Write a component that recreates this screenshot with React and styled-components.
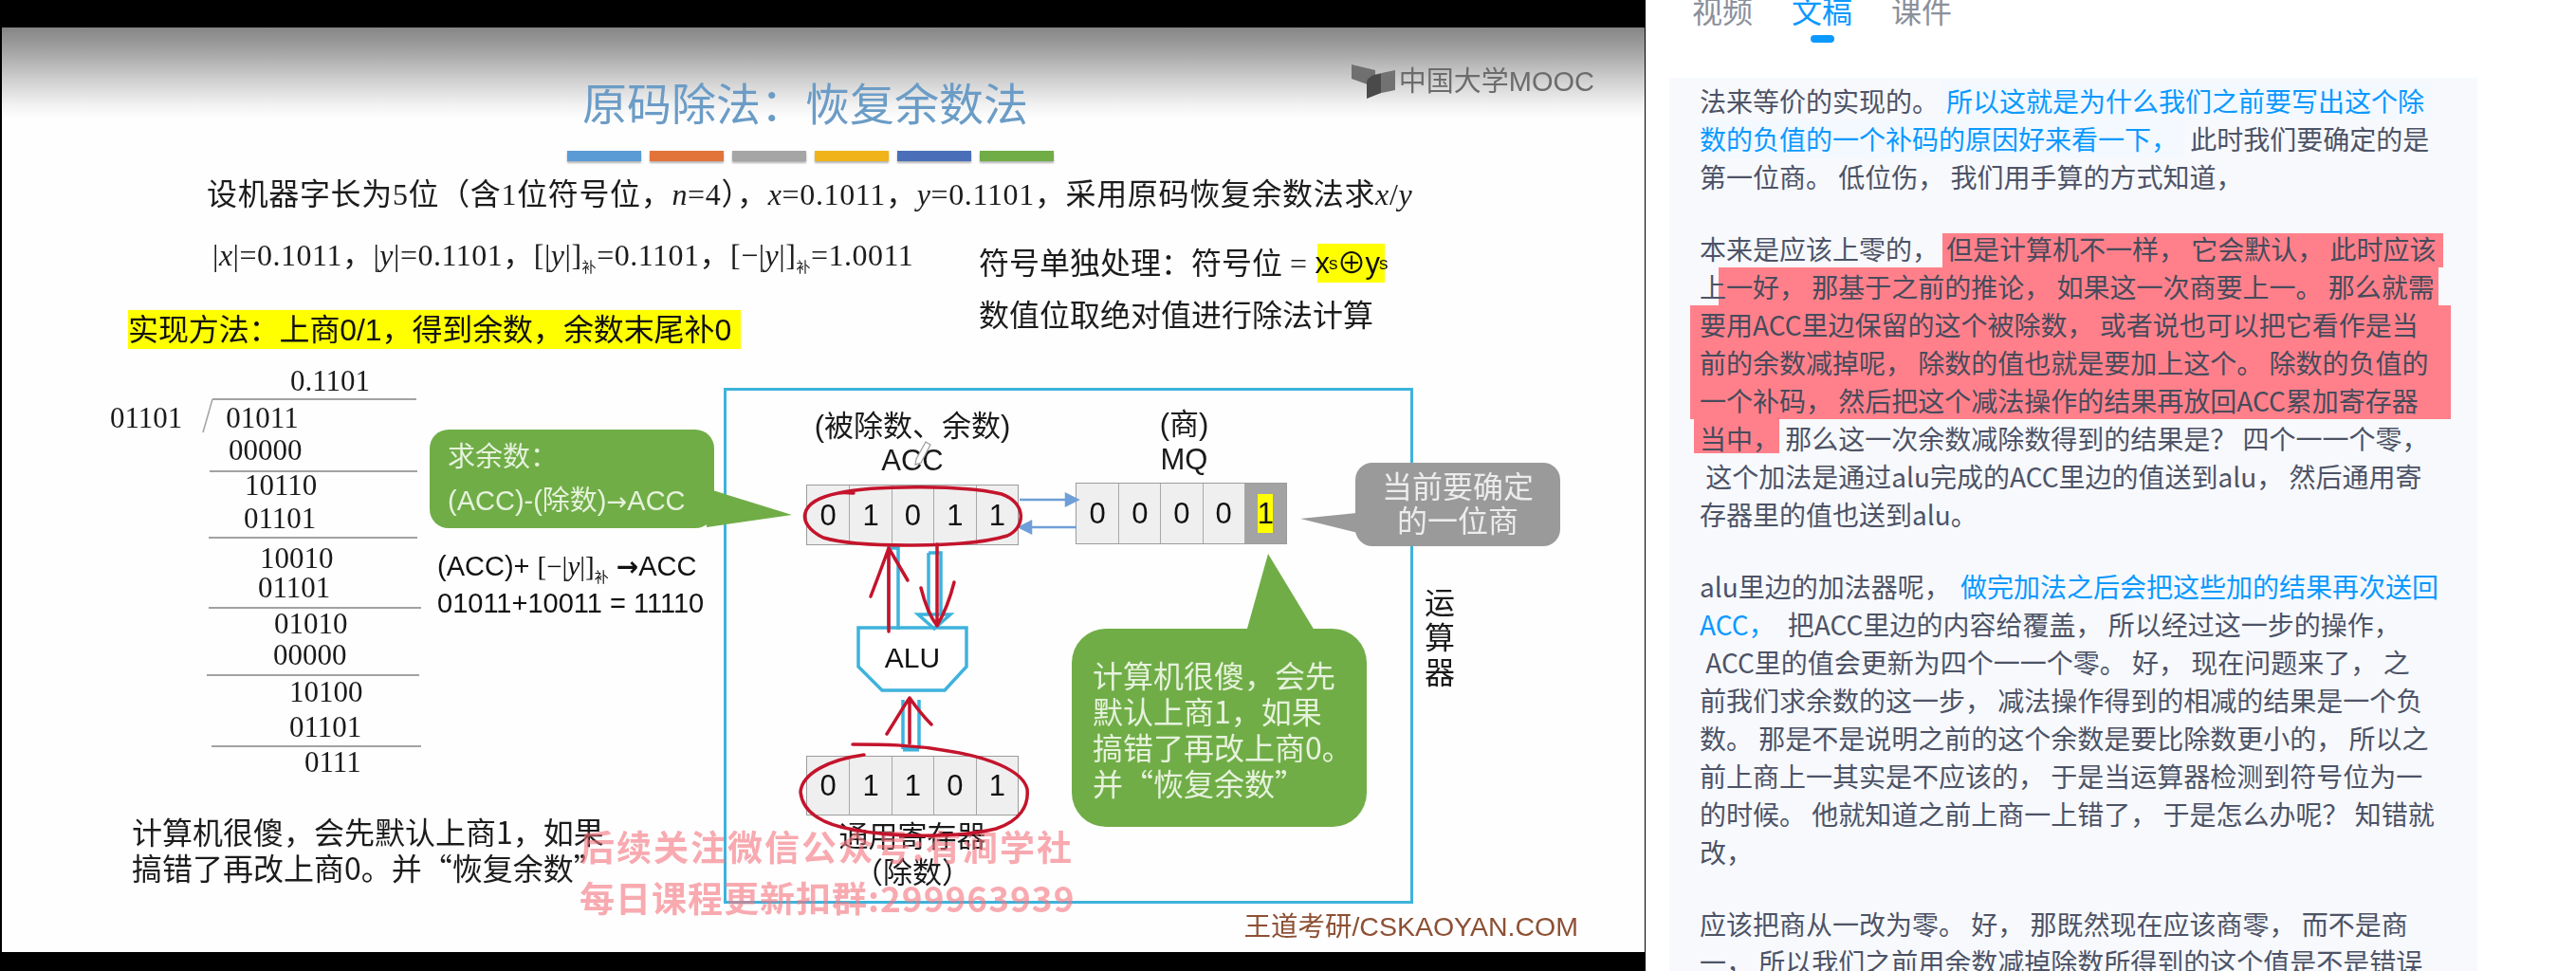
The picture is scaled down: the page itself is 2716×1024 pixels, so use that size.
import React from "react";
import styled, { createGlobalStyle } from "styled-components";

const CJK = '"Noto Sans CJK SC", sans-serif';
const SERIF = '"Liberation Serif", "Noto Sans CJK SC", serif';
const SANS = '"Liberation Sans", "Noto Sans CJK SC", sans-serif';
const GREEN = "#70ad47";
const GRAY = "#9a9a9a";
const CYAN = "#3db3dc";
const RED = "#c4142c";
const PINK = "#ff808a";

const Global = createGlobalStyle`
  html, body { margin: 0; padding: 0; background: #fff; overflow: hidden; }
  #root { width: 2716px; height: 1024px; }
`;

const Page = styled.div`
  display: flex;
  width: 2716px;
  height: 1024px;
  overflow: hidden;
  background: #fff;
`;

/* video frame */
const Video = styled.section`
  position: relative;
  flex: 0 0 1735px;
  box-sizing: border-box;
  height: 1024px;
  padding: 29px 1px 20px 2px;
  background: #000;
  overflow: hidden;
  filter: blur(0.55px);
`;
const Slide = styled.div`
  display: flex;
  flex-direction: column;
  height: 100%;
  background: linear-gradient(#858585 0, #a4a4a4 25px, #cfcfcf 55px, #f2f2f2 82px, #fefefe 96px, #fefefe 100%);
`;

/* header */
const Header = styled.header`
  display: flex;
  align-items: flex-start;
  height: 130px;
  padding-right: 53px;
`;
const Title = styled.h1`
  margin: 54px 0 0 612px;
  font: 400 47px/47px ${CJK};
  color: #6b9cc6;
  white-space: pre;
`;
const Logo = styled.div`
  display: flex;
  align-items: center;
  margin: 37px 0 0 auto;
  font: 400 29px/1 ${SANS};
  color: #6c6c6c;
  white-space: pre;
`;
const LogoText = styled.span`
  margin-left: -3px;
`;
const Bars = styled.div`
  display: flex;
  gap: 9px;
  margin-left: 596px;
`;
const Bar = styled.i`
  display: block;
  width: 78px;
  height: 11px;
  background: ${(p) => p.$c};
  box-shadow: 0 2px 2px rgba(0, 0, 0, 0.3);
`;

/* problem statement */
const Statement = styled.p`
  margin: 19px 0 0 216px;
  font: 400 32px/32px ${SERIF};
  letter-spacing: 0.65px;
  color: #1c1c1c;
  white-space: pre;
`;
const NotesRow = styled.div`
  display: flex;
  margin-top: 32px;
`;
const NotesLeft = styled.div`
  flex: 0 0 1030px;
  display: flex;
  flex-direction: column;
`;
const MathLine = styled.div`
  margin-left: 222px;
  font: 400 32px/32px ${SERIF};
  letter-spacing: 0.5px;
  color: #1c1c1c;
  white-space: pre;
`;
const Em = styled.i`
  font-family: "Liberation Serif", serif;
`;
const Sub = styled.sub`
  font-size: 15px;
  line-height: 0;
  font-family: ${CJK};
`;
const MethodBand = styled.div`
  display: flex;
  align-items: center;
  width: 646px;
  height: 41px;
  margin: 42px 0 0 133px;
  background: #ffff00;
  font: 400 32px/1 ${SANS};
  letter-spacing: -0.1px;
  color: #111;
  white-space: pre;
`;
const NotesRight = styled.div`
  display: flex;
  flex-direction: column;
  gap: 19px;
  padding-top: 4px;
  font: 400 32px/32px ${SERIF};
  color: #1c1c1c;
  white-space: pre;
`;
const SignRow = styled.div`
  display: flex;
  align-items: center;
  gap: 11px;
`;
const SignBox = styled.span`
  display: flex;
  align-items: center;
  justify-content: center;
  width: 71px;
  height: 41px;
  background: #ffff00;
  font: 400 31px/1 ${SANS};
  letter-spacing: -1px;
  color: #111;
`;
const SignSub = styled.sub`
  font-size: 19px;
  line-height: 0;
`;

/* main row */
const Main = styled.main`
  display: flex;
  align-items: flex-start;
  margin-top: 19px;
`;
const LeftColumn = styled.div`
  flex: 0 0 337px;
  min-width: 0;
  margin-left: 114px;
  display: flex;
  flex-direction: column;
`;
const DivRow = styled.div`
  display: flex;
  height: 30px;
  margin-top: ${(p) => p.$mt}px;
  padding-left: ${(p) => p.$pl}px;
  font: 400 31px/30px "Liberation Serif", serif;
  color: #1a1a1a;
  white-space: pre;
`;
const Divisor = styled.span`
  margin-right: 46px;
`;
const Rule = styled.i`
  display: block;
  width: ${(p) => p.$w}px;
  height: 2px;
  margin-top: ${(p) => p.$mt}px;
  margin-left: ${(p) => p.$ml}px;
  background: #a2a2a2;
`;
const SlowNote = styled.div`
  margin: 38px 0 0 23px;
  font: 400 32px/38px ${CJK};
  color: #1c1c1c;
  white-space: pre;
`;
const MidColumn = styled.div`
  flex: 0 0 310px;
  min-width: 0;
  display: flex;
  flex-direction: column;
  padding-top: 66px;
`;
const Bubble = styled.div`
  box-sizing: border-box;
  flex: none;
  align-self: flex-start;
  width: ${(p) => p.$w}px;
  height: ${(p) => p.$h}px;
  margin-top: ${(p) => p.$mt || 0}px;
  margin-left: ${(p) => p.$ml || 0}px;
  padding-left: ${(p) => p.$pl || 0}px;
  display: flex;
  flex-direction: column;
  justify-content: center;
  align-items: flex-start;
  border-radius: ${(p) => p.$r}px;
  background: ${GREEN};
  color: #e6f2dc;
  font: 400 ${(p) => p.$size || 32}px/${(p) => p.$lh}px ${(p) => (p.$cjk ? CJK : SANS)};
  white-space: pre;
`;
const GrayBubble = styled.div`
  position: absolute;
  left: 1429px;
  top: 488px;
  width: 216px;
  height: 88px;
  display: flex;
  flex-direction: column;
  align-items: center;
  justify-content: center;
  border-radius: 18px;
  background: ${GRAY};
  color: #ececec;
  font: 400 32px/36px ${SANS};
  white-space: pre;
`;
const Arrow = styled.span`
  font-family: "DejaVu Sans", sans-serif;
  font-weight: ${(p) => p.$w || 400};
  font-size: ${(p) => p.$s || 26}px;
`;
const FormulaBlock = styled.div`
  margin: 21px 0 0 8px;
  font: 400 29px/39px ${SANS};
  color: #111;
  white-space: pre;
`;
const FormulaSerif = styled.span`
  font: 400 29px/1 "Liberation Serif", serif;
`;

/* arithmetic unit diagram */
const UnitFrame = styled.div`
  flex: 0 0 727px;
  height: 544px;
  box-sizing: border-box;
  margin-top: 22px;
  padding: 20px 0 0 84px;
  display: flex;
  align-items: flex-start;
  border: 3.5px solid ${CYAN};
`;
const DataColumn = styled.div`
  flex: 0 0 224px;
  display: flex;
  flex-direction: column;
  align-items: center;
`;
const QuotientColumn = styled.div`
  flex: 0 0 223px;
  min-width: 0;
  margin: -3px 0 0 60px;
  display: flex;
  flex-direction: column;
  align-items: center;
`;
const RegLabel = styled.div`
  margin-left: ${(p) => p.$ml || 0}px;
  margin-top: ${(p) => p.$mt || 0}px;
  font: 400 31px/${(p) => p.$lh || 36}px ${SANS};
  color: #1a1a1a;
  white-space: pre;
`;
const Register = styled.div`
  flex: none;
  align-self: stretch;
  height: ${(p) => p.$h}px;
  margin-top: ${(p) => p.$mt}px;
  display: grid;
  grid-template-columns: repeat(5, 1fr);
  box-sizing: border-box;
  border: 1.5px solid #9c9c9c;
  background: #efefef;
`;
const Cell = styled.div`
  display: flex;
  align-items: center;
  justify-content: center;
  font: 400 31px/1 ${SANS};
  color: #111;
  background: ${(p) => (p.$dark ? "#a3a3a3" : "transparent")};
  & + & {
    border-left: 1.5px solid #a8a8a8;
  }
`;
const QuotientBit = styled.span`
  display: flex;
  align-items: center;
  justify-content: center;
  width: 16px;
  height: 41px;
  background: #ffff00;
`;
const Alu = styled.div`
  flex: none;
  display: grid;
  width: 118px;
  height: 71px;
  margin-top: 85px;
  place-items: center;
  & > * {
    grid-area: 1 / 1;
  }
`;
const AluName = styled.span`
  margin-top: -3px;
  font: 400 30px/1 ${SANS};
  color: #111;
`;
const UnitLabel = styled.div`
  flex: 0 0 32px;
  margin: 231px 0 0 12px;
  font: 400 32px/37px ${SERIF};
  color: #1a1a1a;
  text-align: center;
`;
const Overlay = styled.svg`
  position: absolute;
  left: 0;
  top: 0;
  pointer-events: none;
`;
const Watermark = styled.div`
  position: absolute;
  left: 611px;
  top: 873px;
  display: flex;
  flex-direction: column;
  gap: 15px;
  font: 700 37px/39px ${CJK};
  color: rgba(243, 118, 128, 0.62);
  white-space: pre;
`;
const WatermarkLine = styled.span`
  letter-spacing: ${(p) => p.$ls}px;
`;
const CreditRow = styled.footer`
  display: flex;
  justify-content: flex-end;
  margin-top: 10px;
  padding-right: 70px;
  font: 400 28.5px/29px ${SANS};
  color: #8d5034;
  white-space: pre;
`;

/* transcript side */
const Side = styled.aside`
  flex: 1;
  display: flex;
  flex-direction: column;
  padding-left: 25px;
  min-width: 0;
`;
const Tabs = styled.nav`
  display: flex;
  gap: 41px;
  margin: -6px 0 37px 24px;
`;
const Tab = styled.div`
  display: flex;
  flex-direction: column;
  align-items: center;
  gap: 11px;
  font: 400 32px/32px ${CJK};
  color: ${(p) => (p.$active ? "#0a99ff" : "#8b909b")};
`;
const TabDot = styled.i`
  width: 25px;
  height: 8px;
  border-radius: 4px;
  background: ${(p) => (p.$active ? "#0a99ff" : "transparent")};
`;
const Panel = styled.div`
  width: 852px;
  flex: 1;
  box-sizing: border-box;
  padding: 4px 0 0 32px;
  background: #f7f9fd;
  overflow: hidden;
  font: 400 28px/40px ${CJK};
  color: #4d5366;
`;
const Para = styled.div`
  margin-bottom: 36px;
`;
const Line = styled.div`
  height: 40px;
  white-space: pre;
`;
const Blue = styled.span`
  display: inline-block;
  padding: 0 7px 0 ${(p) => p.$pl ?? 6}px;
  margin-left: ${(p) => p.$ml ?? 0}px;
  color: #0a99ff;
  background: ${(p) => (p.$plain ? "transparent" : "#f3f9ff")};
`;
const Pink = styled.span`
  display: inline-block;
  box-sizing: border-box;
  height: 40px;
  vertical-align: top;
  width: ${(p) => p.$w}px;
  margin-left: ${(p) => p.$ml}px;
  padding-left: ${(p) => p.$pl}px;
  color: #474b5c;
  background: ${(p) => (p.$band ? `linear-gradient(${p.$band})` : PINK)};
`;
const Above = styled.span`
  position: relative;
  z-index: 1;
`;

const barColors = ["#5b9bd5", "#e2743a", "#a5a5a5", "#f0b41a", "#4a6fb8", "#70ad47"];

export default function App() {
  return (
    <Page>
      <Global />
      <Video>
        <Slide>
          <Header>
            <Title>原码除法：恢复余数法</Title>
            <Logo>
              <svg width="54" height="40" viewBox="0 0 54 40">
                <polygon points="1,2 26,8 26,26 1,17" fill="#707070" />
                <polygon points="28,12 47,8 47,29 18,35" fill="#727272" />
                <path d="M17 38 L17 20 Q20 12 32 12 L32 32 Z" fill="#4a4a4a" />
              </svg>
              <LogoText>中国大学MOOC</LogoText>
            </Logo>
          </Header>
          <Bars>{barColors.map((c) => <Bar key={c} $c={c} />)}</Bars>
          <Statement>设机器字长为5位（含1位符号位，<Em>n</Em>=4），<Em>x</Em>=0.1011，<Em>y</Em>=0.1101，采用原码恢复余数法求<Em>x</Em>/<Em>y</Em></Statement>
          <NotesRow>
            <NotesLeft>
              <MathLine>|<Em>x</Em>|=0.1011，|<Em>y</Em>|=0.1101，[|<Em>y</Em>|]<Sub>补</Sub>=0.1101，[−|<Em>y</Em>|]<Sub>补</Sub>=1.0011</MathLine>
              <MethodBand>实现方法：上商0/1，得到余数，余数末尾补0</MethodBand>
            </NotesLeft>
            <NotesRight>
              <SignRow>
                符号单独处理：符号位 =
                <SignBox>x<SignSub>s</SignSub>⊕y<SignSub>s</SignSub></SignBox>
              </SignRow>
              <div>数值位取绝对值进行除法计算</div>
            </NotesRight>
          </NotesRow>

          <Main>
            <LeftColumn>
              <DivRow $mt={0} $pl={190}>0.1101</DivRow>
              <Rule $mt={3} $ml={108} $w={215} />
              <DivRow $mt={4} $pl={0}><Divisor>01101</Divisor>01011</DivRow>
              <DivRow $mt={4} $pl={125}>00000</DivRow>
              <Rule $mt={6} $ml={105} $w={219} />
              <DivRow $mt={-1} $pl={142}>10110</DivRow>
              <DivRow $mt={5} $pl={141}>01101</DivRow>
              <Rule $mt={4} $ml={104} $w={220} />
              <DivRow $mt={6} $pl={158}>10010</DivRow>
              <DivRow $mt={1} $pl={156}>01101</DivRow>
              <Rule $mt={5} $ml={104} $w={224} />
              <DivRow $mt={1} $pl={173}>01010</DivRow>
              <DivRow $mt={3} $pl={172}>00000</DivRow>
              <Rule $mt={5} $ml={102} $w={224} />
              <DivRow $mt={2} $pl={189}>10100</DivRow>
              <DivRow $mt={7} $pl={189}>01101</DivRow>
              <Rule $mt={4} $ml={107} $w={221} />
              <DivRow $mt={1} $pl={205}>0111</DivRow>
              <SlowNote>{"计算机很傻，会先默认上商1，如果\n搞错了再改上商0。并“恢复余数”"}</SlowNote>
            </LeftColumn>

            <MidColumn>
              <Bubble $w={300} $h={104} $r={20} $pl={19} $lh={46} $size={29}>
                <span>求余数：</span>
                <span>(ACC)-(除数)<Arrow>→</Arrow>ACC</span>
              </Bubble>
              <FormulaBlock>
                <div>(ACC)+ <FormulaSerif>[−|<Em>y</Em>|]</FormulaSerif><Sub>补</Sub> <Arrow $w={700} $s={28}>→</Arrow>ACC</div>
                <div>01011+10011 = 11110</div>
              </FormulaBlock>
            </MidColumn>

            <UnitFrame>
              <DataColumn>
                <RegLabel>(被除数、余数)</RegLabel>
                <RegLabel>ACC</RegLabel>
                <Register $mt={7} $h={64}>
                  {[0, 1, 0, 1, 1].map((d, i) => <Cell key={i}>{d}</Cell>)}
                </Register>
                <Alu>
                  <svg width="118" height="71" viewBox="0 0 118 71">
                    <polygon points="2,2 116,2 116,43 93,68 27,68 2,43" fill="#fff" stroke={CYAN} strokeWidth="3.5" />
                  </svg>
                  <AluName>ALU</AluName>
                </Alu>
                <Register $mt={66} $h={63}>
                  {[0, 1, 1, 0, 1].map((d, i) => <Cell key={i}>{d}</Cell>)}
                </Register>
                <RegLabel $lh={38} $mt={4}>通用寄存器</RegLabel>
                <RegLabel $lh={38}>（除数）</RegLabel>
              </DataColumn>
              <QuotientColumn>
                <RegLabel $lh={37} $ml={6}>(商)</RegLabel>
                <RegLabel $lh={37} $ml={6}>MQ</RegLabel>
                <Register $mt={6} $h={65}>
                  {[0, 0, 0, 0].map((d, i) => <Cell key={i}>{d}</Cell>)}
                  <Cell $dark><QuotientBit>1</QuotientBit></Cell>
                </Register>
                <Bubble $w={311} $h={209} $r={36} $mt={89} $ml={-4} $pl={22} $lh={38} $cjk>
                  <span>计算机很傻，会先</span>
                  <span>默认上商1，如果</span>
                  <span>搞错了再改上商0。</span>
                  <span>并“恢复余数”</span>
                </Bubble>
              </QuotientColumn>
            </UnitFrame>
            <UnitLabel>运算器</UnitLabel>
          </Main>
          <CreditRow>王道考研/CSKAOYAN.COM</CreditRow>
        </Slide>

        {/* bubble tails, data paths */}
        <Overlay width="1735" height="1024" viewBox="0 0 1735 1024">
          <polygon points="745,515 835,543 745,556" fill={GREEN} />
          <polygon points="1313,670 1337,584 1389,670" fill={GREEN} />
          <polygon points="1440,540 1371,547 1440,564" fill={GRAY} />
          <path d="M214 456 L224 421" stroke="#a2a2a2" strokeWidth="1.5" fill="none" />
          <g stroke="#6f9fd8" strokeWidth="2.5" fill="#6f9fd8">
            <path d="M1075 527 H1128" /><polygon points="1136,527 1124,521 1124,533" />
            <path d="M1135 556 H1082" /><polygon points="1075,556 1087,550 1087,562" />
          </g>
          <g fill="none" stroke={CYAN} strokeWidth="3.5">
            <path d="M937 664 V578 H947 V664" />
            <path d="M979 583 H992 V648 M979 583 V648" />
            <path d="M968 648 H1002 L985 663 Z" />
            <path d="M952 790 V738 M969 790 V738" />
            <path d="M952 790 H969" strokeWidth="5" />
          </g>
        </Overlay>
        <GrayBubble><span>当前要确定</span><span>的一位商</span></GrayBubble>
        <Watermark>
          <WatermarkLine $ls={2}>后续关注微信公众号:有涧学社</WatermarkLine>
          <WatermarkLine $ls={1}>每日课程更新扣群:299963939</WatermarkLine>
        </Watermark>

        {/* hand-drawn marks made on the video */}
        <Overlay width="1735" height="1024" viewBox="0 0 1735 1024">
          <g fill="none" stroke={RED} strokeWidth="3.5" strokeLinecap="round" strokeLinejoin="round">
            <path d="M884 520 C925 511 1020 512 1056 521 C1082 530 1082 556 1062 565 C1020 578 905 578 868 567 C838 552 842 528 884 520 C890 519 895 520 900 520" />
            <path d="M911 796 C875 801 846 815 844 835 C846 858 870 870 900 875 C940 883 1010 884 1050 874 C1075 866 1085 850 1083 832 C1078 812 1040 798 1000 792 C960 785 930 785 899 785" />
            <path d="M937 666 V578 M918 629 C926 608 932 592 937 578 C944 590 950 600 957 612" />
            <path d="M988 574 V659 M971 620 C976 640 982 652 988 660 C996 646 1002 630 1006 614" />
            <path d="M959 784 V736 M935 774 C944 760 952 746 959 736 C966 746 974 756 982 764" />
          </g>
          <path d="M966 484 L976 466 L981 469 L971 488 L965 490 Z" fill="#fff" stroke="#999" strokeWidth="1.2" />
        </Overlay>
      </Video>

      <Side>
        <Tabs>
          <Tab>视频<TabDot /></Tab>
          <Tab $active>文稿<TabDot $active /></Tab>
          <Tab>课件<TabDot /></Tab>
        </Tabs>
        <Panel>
          <Para>
            <Line>法来等价的实现的。<Blue $ml={2}>所以这就是为什么我们之前要写出这个除</Blue></Line>
            <Line><Blue $pl={0}>数的负值的一个补码的原因好来看一下，</Blue> 此时我们要确定的是</Line>
            <Line>第一位商。 低位伤， 我们用手算的方式知道，</Line>
          </Para>
          <Para>
            <Line>本来是应该上零的，<Pink $ml={4} $pl={4} $w={528} $band={`transparent 4px, ${PINK} 4px`}>但是计算机不一样， 它会默认， 此时应该</Pink></Line>
            <Line><Above>上</Above><Pink $ml={-8} $pl={8} $w={759}>一好， 那基于之前的推论， 如果这一次商要上一。 那么就需</Pink></Line>
            <Line><Pink $ml={-10} $pl={10} $w={802}>要用ACC里边保留的这个被除数， 或者说也可以把它看作是当</Pink></Line>
            <Line><Pink $ml={-10} $pl={10} $w={802}>前的余数减掉呢， 除数的值也就是要加上这个。 除数的负值的</Pink></Line>
            <Line><Pink $ml={-10} $pl={10} $w={802}>一个补码， 然后把这个减法操作的结果再放回ACC累加寄存器</Pink></Line>
            <Line><Pink $ml={-6} $pl={6} $w={90} $band={`${PINK} 36px, transparent 36px`}>当中，</Pink> 那么这一次余数减除数得到的结果是？ 四个一一个零，</Line>
            <Line> 这个加法是通过alu完成的ACC里边的值送到alu， 然后通用寄</Line>
            <Line>存器里的值也送到alu。</Line>
          </Para>
          <Para>
            <Line>alu里边的加法器呢， <Blue $plain $pl={4}>做完加法之后会把这些加的结果再次送回</Blue></Line>
            <Line><Blue $plain $pl={0}>ACC，</Blue> 把ACC里边的内容给覆盖， 所以经过这一步的操作，</Line>
            <Line> ACC里的值会更新为四个一一个零。 好， 现在问题来了， 之</Line>
            <Line>前我们求余数的这一步， 减法操作得到的相减的结果是一个负</Line>
            <Line>数。 那是不是说明之前的这个余数是要比除数更小的， 所以之</Line>
            <Line>前上商上一其实是不应该的， 于是当运算器检测到符号位为一</Line>
            <Line>的时候。 他就知道之前上商一上错了， 于是怎么办呢？ 知错就</Line>
            <Line>改，</Line>
          </Para>
          <Para>
            <Line>应该把商从一改为零。 好， 那既然现在应该商零， 而不是商</Line>
            <Line>一， 所以我们之前用余数减掉除数所得到的这个值是不是错误</Line>
          </Para>
        </Panel>
      </Side>
    </Page>
  );
}
